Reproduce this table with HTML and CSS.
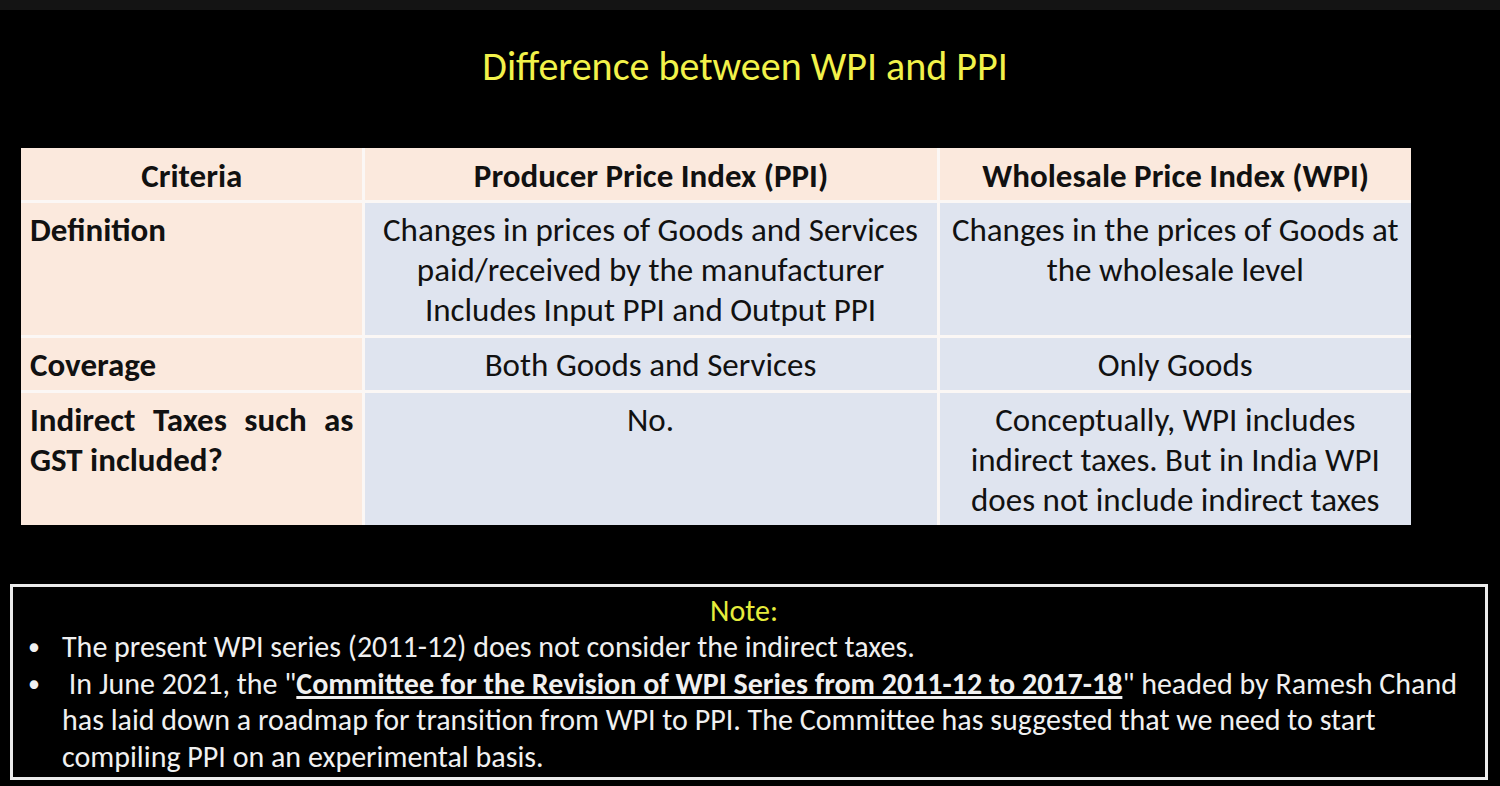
FILE: index.html
```html
<!DOCTYPE html>
<html lang="en">
<head>
<meta charset="utf-8">
<title>Difference between WPI and PPI</title>
<link rel="stylesheet" href="styles.css">
</head>
<body>
<div class="topbar"></div>
<main class="slide">
  <h1 class="title">Difference between WPI and PPI</h1>
  <table class="compare">
    <colgroup>
      <col class="c1"><col class="c2"><col class="c3">
    </colgroup>
    <thead>
      <tr class="head">
        <th>Criteria</th>
        <th>Producer Price Index (PPI)</th>
        <th>Wholesale Price Index (WPI)</th>
      </tr>
    </thead>
    <tbody>
      <tr class="r-def">
        <th class="label">Definition</th>
        <td>Changes in prices of Goods and Services<br>paid/received by the manufacturer<br>Includes Input PPI and Output PPI</td>
        <td>Changes in the prices of Goods at<br>the wholesale level</td>
      </tr>
      <tr class="r-cov">
        <th class="label">Coverage</th>
        <td>Both Goods and Services</td>
        <td>Only Goods</td>
      </tr>
      <tr class="r-tax">
        <th class="label justify">Indirect Taxes such as GST included?</th>
        <td>No.</td>
        <td>Conceptually, WPI includes<br>indirect taxes. But in India WPI<br>does not include indirect taxes</td>
      </tr>
    </tbody>
  </table>
  <section class="note">
    <h2 class="note-title">Note:</h2>
    <ul class="note-list">
      <li>The present WPI series (2011-12) does not consider the indirect taxes.</li>
      <li>&nbsp;In June 2021, the "<strong><u>Committee for the Revision of WPI Series from 2011-12 to 2017-18</u></strong>" headed by Ramesh Chand has laid down a roadmap for transition from WPI to PPI. The Committee has suggested that we need to start compiling PPI on an experimental basis.</li>
    </ul>
  </section>
</main>
</body>
</html>
```

FILE: styles.css
```css
html, body {
  margin: 0;
  padding: 0;
  background: #000;
}
body {
  font-family: Carlito, "Open Sans", "Liberation Sans", sans-serif;
  width: 1500px;
  height: 786px;
  overflow: hidden;
}
.topbar {
  height: 10px;
  background: #141414;
}
.slide {
  display: flex;
  flex-direction: column;
}
.title {
  margin: 34px 0 0 0;
  height: 46px;
  text-align: center;
  color: #f2f24a;
  font-weight: 400;
  font-size: 40px;
  line-height: 46px;
  padding-right: 10px;
}
.compare {
  margin: 58px 0 0 21px;
  width: 1390px;
  border-collapse: collapse;
  table-layout: fixed;
  color: #111;
  font-size: 33px;
  line-height: 40px;
}
.c1 { width: 342px; }
.c2 { width: 575px; }
.c3 { width: 473px; }
.compare th, .compare td {
  border: 3px solid #fbf7f5;
  vertical-align: top;
  padding: 7px 8px 5px 9px;
}
.compare thead th { border-top: none; }
.compare tbody tr:last-child > * { border-bottom: none; }
.compare tr > :first-child { border-left: none; }
.compare tr > :last-child { border-right: none; }
.head th {
  background: #fbe9dd;
  text-align: center;
  font-weight: 700;
  height: 40px;
  padding-top: 8px;
  padding-bottom: 4px;
}
.label {
  background: #fbe9dd;
  text-align: left;
  font-weight: 700;
}
.justify {
  text-align: justify;
  text-align-last: left;
}
.compare td {
  background: #dfe4ef;
  text-align: center;
  padding-left: 4px;
  padding-right: 4px;
}
.r-def td, .r-def th { height: 118px; }
.r-cov td, .r-cov th { height: 38px; }
.r-tax td, .r-tax th { height: 120px; }
.note {
  margin: 59px 0 0 10px;
  width: 1472px;
  height: 190px;
  border: 3px solid #ececec;
  color: #f0f0f0;
}
.note-title {
  margin: 6px 0 0 0;
  text-align: center;
  color: #e6ec3c;
  font-weight: 400;
  font-size: 30px;
  line-height: 36px;
  padding-right: 10px;
}
.note-list {
  margin: 0;
  padding: 0 24px 0 0;
  list-style: none;
  font-size: 30px;
  line-height: 36.5px;
}
.note-list li {
  position: relative;
  padding-left: 49px;
}
.note-list li::before {
  content: "\2022";
  position: absolute;
  left: 15px;
  top: 0;
  font-size: 24px;
}
.note-list strong { font-weight: 700; }
```
